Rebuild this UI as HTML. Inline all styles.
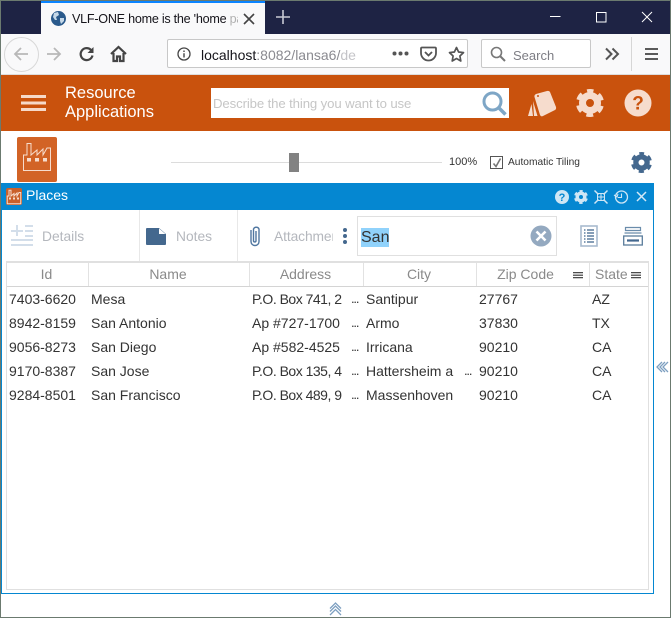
<!DOCTYPE html>
<html><head><meta charset="utf-8">
<style>
html,body{margin:0;padding:0;width:671px;height:618px;overflow:hidden;background:#fff}
body{position:relative;font-family:"Liberation Sans",sans-serif;color:#333}
.a{position:absolute;white-space:nowrap}
svg{position:absolute;overflow:visible}
.h{position:absolute;top:263px;height:23px;line-height:22px;font-size:14px;color:#8a8a8a;text-align:center;box-sizing:border-box;border-right:1px solid #e2e2e2;padding-right:2px}
.c{position:absolute;font-size:14px;color:#333;white-space:nowrap;line-height:18px}
.p{letter-spacing:-.5px}
.e{letter-spacing:-1.2px;font-size:13px}
</style></head><body>
<div class="a" style="left:0;top:0;width:671px;height:34px;background:#1e2344"></div>
<div class="a" style="left:41px;top:1px;width:224px;height:33px;background:#f9f9fa"></div>
<div class="a" style="left:41px;top:1px;width:224px;height:2px;background:#0a84ff"></div>
<svg style="left:51px;top:11px" width="15" height="15" viewBox="0 0 15 15"><circle cx="7.5" cy="7.5" r="7.5" fill="#2a5a8c"/><path d="M3 2l4-1 1 3-3 2 1 3-2 0-2-3zM9 7l4 0 0 3-3 3-1-3z" fill="#c5d8e8"/></svg>
<div class="a" style="left:72px;top:10px;font-size:12.6px;letter-spacing:-.25px;line-height:18px;color:#15141a;width:166px;overflow:hidden">VLF-ONE home is the 'home <span style="color:#b0b0b0">pa</span></div>
<svg style="left:243px;top:13px" width="12" height="12"><path d="M1 1L11 11M11 1L1 11" stroke="#444" stroke-width="1.6"/></svg>
<svg style="left:276px;top:10px" width="14" height="14"><path d="M7 0V14M0 7H14" stroke="#c8cad4" stroke-width="1.6"/></svg>
<svg style="left:550px;top:10px" width="110" height="14"><path d="M0 6.5H10.500" stroke="#fff"/><rect x="46.5" y="2.5" width="9.500" height="9.500" fill="none" stroke="#fff"/><path d="M92 2L102 12M102 2L92 12" stroke="#fff"/></svg>

<div class="a" style="left:0;top:34px;width:671px;height:41px;background:#f9f9fa;border-bottom:1px solid #ddd;box-sizing:border-box"></div>
<div class="a" style="left:4px;top:37px;width:33px;height:33px;border:1px solid #d8d8d8;border-radius:50%;background:#f9f9fa"></div>
<svg style="left:13px;top:46px" width="16" height="16"><path d="M15 8H2M8 2L2 8L8 14" fill="none" stroke="#b8b8b8" stroke-width="1.8"/></svg>
<svg style="left:46px;top:46px" width="16" height="16"><path d="M1 8H14M8 2L14 8L8 14" fill="none" stroke="#b8b8b8" stroke-width="1.8"/></svg>
<svg style="left:79px;top:46px" width="16" height="16"><path d="M13.5 9.5A6 6 0 1 1 11.5 3.5L13 5" fill="none" stroke="#444" stroke-width="2.200"/><path d="M14.5 1V7H8.5Z" fill="#444"/></svg>
<svg style="left:110px;top:46px" width="17" height="16"><path d="M1 8L8.500 1L16 8M3.500 7V15H7V10.500H10V15H13.500V7" fill="none" stroke="#444" stroke-width="2.200"/></svg>
<div class="a" style="left:167px;top:39px;width:301px;height:29px;box-sizing:border-box;background:#fff;border:1px solid #c8c8c8;border-radius:2px"></div>
<svg style="left:177px;top:47px" width="14" height="14"><circle cx="7" cy="7" r="6" fill="none" stroke="#444" stroke-width="1.300"/><path d="M7 6.200V10.500M7 3.500V5" stroke="#444" stroke-width="1.400"/></svg>
<div class="a" style="left:201px;top:46px;font-size:14px;line-height:18px;width:155px;overflow:hidden;color:#15141a">localhost<span style="color:#8a8a90">:8082/lansa6/</span><span style="color:#c4c4c8">de</span></div>
<svg style="left:392px;top:51px" width="17" height="5"><circle cx="2.500" cy="2.500" r="2" fill="#555"/><circle cx="8.500" cy="2.500" r="2" fill="#555"/><circle cx="14.500" cy="2.500" r="2" fill="#555"/></svg>
<svg style="left:420px;top:46px" width="17" height="16"><path d="M2 1.500H15Q16 1.500 16 2.500V7A7.500 7.500 0 0 1 1 7V2.500Q1 1.500 2 1.500Z" fill="none" stroke="#555" stroke-width="1.800"/><path d="M5 6L8.500 9.500L12 6" fill="none" stroke="#555" stroke-width="1.800"/></svg>
<svg style="left:448px;top:46px" width="17" height="16"><path d="M8.500 1.500L10.600 6L15.500 6.600L11.900 10L12.800 15L8.500 12.500L4.200 15L5.100 10L1.500 6.600L6.400 6Z" fill="none" stroke="#555" stroke-width="1.700" stroke-linejoin="round"/></svg>
<div class="a" style="left:481px;top:39px;width:110px;height:29px;box-sizing:border-box;background:#fff;border:1px solid #c8c8c8;border-radius:2px"></div>
<svg style="left:490px;top:46px" width="16" height="16"><circle cx="6.500" cy="6.500" r="5" fill="none" stroke="#777" stroke-width="1.600"/><path d="M10 10L15 15" stroke="#777" stroke-width="2"/></svg>
<div class="a" style="left:513px;top:47px;font-size:13px;line-height:17px;color:#7d7d84">Search</div>
<svg style="left:605px;top:47px" width="15" height="14"><path d="M1 1.500L6.500 7L1 12.500M7.500 1.500L13 7L7.500 12.500" fill="none" stroke="#555" stroke-width="2"/></svg>
<div class="a" style="left:631px;top:37px;width:1px;height:34px;background:#d6d6d6"></div>
<svg style="left:645px;top:48px" width="13" height="12"><path d="M0 1H13M0 6H13M0 11H13" stroke="#444" stroke-width="1.800"/></svg>

<div class="a" style="left:0;top:75px;width:671px;height:56px;background:#c9520d"></div>
<svg style="left:21px;top:95px" width="25" height="17"><path d="M0 1.500H25M0 8H25M0 14.500H25" stroke="#f6d9c8" stroke-width="3"/></svg>
<div class="a" style="left:65px;top:84px;font-size:16.500px;line-height:19px;color:#fff">Resource<br>Applications</div>
<div class="a" style="left:211px;top:88px;width:298px;height:30px;background:#fff"></div>
<div class="a" style="left:213px;top:95px;font-size:13.200px;letter-spacing:-.12px;line-height:17px;color:#c6c6c6">Describe the thing you want to use</div>
<svg style="left:482px;top:91px" width="25" height="25"><circle cx="10.500" cy="10.500" r="8.500" fill="none" stroke="#7ea6c6" stroke-width="3"/><path d="M16.500 16.500L23.500 23.500" stroke="#7ea6c6" stroke-width="3.500"/></svg>
<svg style="left:527px;top:90px" width="30" height="28"><path d="M9 4L20 1Q22 0.500 23 2L29 17Q29.500 19 28 20L16 26Q14 27 13 25L7.500 7Q7 5 9 4Z" fill="#f6dccd"/><path d="M6 11L10.500 26L7 26ZM4.500 14L6 26L1 26Z" fill="#f6dccd"/><circle cx="11" cy="6" r="1" fill="#c9520d"/></svg>
<svg style="left:576px;top:89px" width="28" height="28" viewBox="0 0 28 28"><circle cx="14" cy="14" r="7.500" fill="none" stroke="#f6dccd" stroke-width="7"/><circle cx="14" cy="14" r="11.500" fill="none" stroke="#f6dccd" stroke-width="5" stroke-dasharray="6.500 5.540" stroke-dashoffset="3.250" transform="rotate(-90 14 14)"/></svg>
<svg style="left:624px;top:89px" width="28" height="28"><circle cx="14" cy="14" r="13.500" fill="#f6dccd"/><text x="14" y="20.500" text-anchor="middle" font-family="Liberation Sans" font-weight="bold" font-size="19" fill="#c9520d">?</text></svg>

<div class="a" style="left:17px;top:137px;width:40px;height:45px;background:#d26326;border-radius:2px"></div>
<svg style="left:23px;top:143px" width="28" height="28"><path d="M0.500 27.500V12H4V0.500H8V12L14 7V12L20 6V12L24 5H27.500V27.500Z" fill="none" stroke="#f6dccd" stroke-width="1"/><path d="M4 15H8V18.500H4ZM12 15H16V18.500H12ZM20 15H24V18.500H20Z" fill="#f6dccd"/></svg>
<div class="a" style="left:171px;top:162px;width:271px;height:1px;background:#dcdcdc"></div>
<div class="a" style="left:289px;top:153px;width:10px;height:19px;background:#828282"></div>
<div class="a" style="left:449px;top:155px;font-size:11px;line-height:15px;color:#333">100%</div>
<div class="a" style="left:490px;top:156px;width:13px;height:13px;box-sizing:border-box;border:1px solid #555;background:#fff"></div>
<svg style="left:492px;top:158px" width="10" height="10"><path d="M1.500 5.500L4 8.500L8.500 0.500" fill="none" stroke="#777" stroke-width="1.600"/></svg>
<div class="a" style="left:508px;top:155px;font-size:10.200px;line-height:15px;color:#333">Automatic Tiling</div>
<svg style="left:631px;top:152px" width="21" height="21" viewBox="0 0 28 28"><circle cx="14" cy="14" r="7.500" fill="none" stroke="#44688e" stroke-width="7"/><circle cx="14" cy="14" r="11.500" fill="none" stroke="#44688e" stroke-width="5" stroke-dasharray="6.500 5.540" stroke-dashoffset="3.250" transform="rotate(-90 14 14)"/></svg>

<div class="a" style="left:1px;top:183px;width:653px;height:27px;background:#0587d1"></div>
<div class="a" style="left:1px;top:183px;width:1px;height:411px;background:#0587d1"></div>
<div class="a" style="left:653px;top:183px;width:1px;height:411px;background:#0587d1"></div>
<div class="a" style="left:1px;top:593px;width:653px;height:1px;background:#0587d1"></div>
<div class="a" style="left:6px;top:188px;width:16px;height:17px;background:#c9602a;border-radius:2px"></div>
<svg style="left:7px;top:190px" width="14" height="14" viewBox="0 0 28 28"><path d="M0.500 27.500V12H4V0.500H8V12L14 7V12L20 6V12L24 5H27.500V27.500Z" fill="none" stroke="#f6dccd" stroke-width="2"/><path d="M4 15H8V19H4ZM12 15H16V19H12ZM20 15H24V19H20Z" fill="#f6dccd"/></svg>
<div class="a" style="left:26px;top:187px;font-size:14px;line-height:17px;color:#fff">Places</div>
<svg style="left:555px;top:190px" width="14" height="14"><circle cx="7" cy="7" r="7" fill="#cfe6f5"/><text x="7" y="11" text-anchor="middle" font-family="Liberation Sans" font-weight="bold" font-size="11" fill="#0587d1">?</text></svg>
<svg style="left:574px;top:190px" width="14" height="14" viewBox="0 0 28 28"><circle cx="14" cy="14" r="7.500" fill="none" stroke="#cfe6f5" stroke-width="7"/><circle cx="14" cy="14" r="11.500" fill="none" stroke="#cfe6f5" stroke-width="5" stroke-dasharray="6.500 5.540" stroke-dashoffset="3.250" transform="rotate(-90 14 14)"/></svg>
<svg style="left:594px;top:190px" width="14" height="14"><path d="M0.500 0.500L4.500 4.500M13.500 0.500L9.500 4.500M0.500 13.500L4.500 9.500M13.500 13.500L9.500 9.500" stroke="#cfe6f5" stroke-width="1.500"/><rect x="3.500" y="3.500" width="7" height="7" fill="none" stroke="#cfe6f5"/><path d="M7 3V11M3 7H11" stroke="#cfe6f5"/></svg>
<svg style="left:614px;top:190px" width="14" height="14"><circle cx="7.500" cy="7" r="6" fill="none" stroke="#cfe6f5" stroke-width="1.300"/><path d="M7.500 3.500V7.500H4M0 5L3 7L4 4" fill="none" stroke="#cfe6f5" stroke-width="1.100"/></svg>
<svg style="left:636px;top:191px" width="11" height="11"><path d="M1 1L10 10M10 1L1 10" stroke="#d4e9f6" stroke-width="1.500"/></svg>

<div class="a" style="left:139px;top:210px;width:1px;height:52px;background:#e8e8e8"></div>
<div class="a" style="left:237px;top:210px;width:1px;height:52px;background:#e8e8e8"></div>
<svg style="left:11px;top:225px" width="23" height="21"><path d="M0 6H12M6 0V11M14 1H22M14 6H22M14 11H22M0 15H22M0 20H22" stroke="#d3deea" stroke-width="2"/></svg>
<div class="a" style="left:42px;top:228px;font-size:13.800px;line-height:17px;color:#b4b7bd">Details</div>
<svg style="left:146px;top:228px" width="21" height="17"><path d="M1 0H13L20 6V16Q20 17 19 17H1Q0 17 0 16V1Q0 0 1 0Z" fill="#44688e"/><path d="M13 0.500V6H19.500Z" fill="#fff"/></svg>
<div class="a" style="left:176px;top:228px;font-size:13.800px;line-height:17px;color:#b4b7bd">Notes</div>
<svg style="left:248px;top:224px" width="14" height="24"><path d="M3 6V17.500A4 4 0 0 0 11 17.500V5A3 3 0 0 0 5.500 5V17A1.300 1.300 0 0 0 8 17V7" fill="none" stroke="#4f76a0" stroke-width="1.400"/></svg>
<div class="a" style="left:274px;top:228px;width:59px;overflow:hidden;font-size:13.800px;letter-spacing:-.1px;line-height:17px;color:#b4b7bd">Attachments</div>
<svg style="left:343px;top:228px" width="4" height="16"><circle cx="2" cy="2" r="2" fill="#44688e"/><circle cx="2" cy="8" r="2" fill="#44688e"/><circle cx="2" cy="14" r="2" fill="#44688e"/></svg>
<div class="a" style="left:357px;top:216px;width:200px;height:40px;box-sizing:border-box;border:1px solid #e0e0e0;background:#fff"></div>
<div class="a" style="left:361px;top:228px;height:19px;background:#90d2fb;font-size:16px;line-height:19px;color:#333">San</div>
<svg style="left:530px;top:225px" width="22" height="22"><circle cx="11" cy="11" r="10.500" fill="#94a9c0"/><path d="M6.500 6.500L15.500 15.500M15.500 6.500L6.500 15.500" stroke="#fff" stroke-width="2.600"/></svg>
<svg style="left:580px;top:225px" width="18" height="22"><rect x="1" y="1" width="16" height="20" fill="#fff" stroke="#a8bbcf" stroke-width="1.600"/><path d="M4 5H5.500M7 5H14M4 8H5.500M7 8H14M4 11H5.500M7 11H14M4 14H5.500M7 14H14M4 17H5.500M7 17H14" stroke="#5f7f9f" stroke-width="1.600"/></svg>
<svg style="left:623px;top:226px" width="20" height="20"><path d="M2.500 1.500H17.500V4.500H2.500ZM1.500 7H18.500" fill="none" stroke="#6a8cab" stroke-width="1.200"/><rect x="0.700" y="10" width="18.600" height="9" fill="none" stroke="#5a7c9c" stroke-width="1.300"/><path d="M4 14.500H16" stroke="#44688e" stroke-width="2.200"/></svg>

<div class="a" style="left:6px;top:261px;width:643px;height:329px;box-sizing:border-box;border:1px solid #e0e0e0;border-top-width:2px"></div>
<div class="a" style="left:7px;top:286px;width:641px;height:1px;background:#d4d4d4"></div>
<div class="h" style="left:7px;width:82px">Id</div>
<div class="h" style="left:89px;width:161px">Name</div>
<div class="h" style="left:250px;width:114px">Address</div>
<div class="h" style="left:364px;width:113px">City</div>
<div class="h" style="left:477px;width:113px;padding-right:15px">Zip Code</div>
<div class="h" style="left:590px;width:58px;border:0;text-align:left;padding-left:5px;padding-right:0">State</div>
<svg style="left:573px;top:272px" width="10" height="7"><path d="M0 .7H10M0 3.200H10M0 5.700H10" stroke="#333" stroke-width="1.200"/></svg>
<svg style="left:631px;top:272px" width="10" height="7"><path d="M0 .7H10M0 3.200H10M0 5.700H10" stroke="#333" stroke-width="1.200"/></svg>

<div class="c" style="left:9px;top:290px">7403-6620</div><div class="c" style="left:91px;top:290px">Mesa</div><div class="c p" style="left:252px;top:290px">P.O. Box 741, 2</div><div class="c e" style="left:351px;top:290px">...</div><div class="c" style="left:366px;top:290px">Santipur</div><div class="c" style="left:479px;top:290px">27767</div><div class="c" style="left:592px;top:290px">AZ</div>
<div class="c" style="left:9px;top:314px">8942-8159</div><div class="c" style="left:91px;top:314px">San Antonio</div><div class="c" style="left:252px;top:314px">Ap #727-1700</div><div class="c e" style="left:351px;top:314px">...</div><div class="c" style="left:366px;top:314px">Armo</div><div class="c" style="left:479px;top:314px">37830</div><div class="c" style="left:592px;top:314px">TX</div>
<div class="c" style="left:9px;top:338px">9056-8273</div><div class="c" style="left:91px;top:338px">San Diego</div><div class="c" style="left:252px;top:338px">Ap #582-4525</div><div class="c e" style="left:351px;top:338px">...</div><div class="c" style="left:366px;top:338px">Irricana</div><div class="c" style="left:479px;top:338px">90210</div><div class="c" style="left:592px;top:338px">CA</div>
<div class="c" style="left:9px;top:362px">9170-8387</div><div class="c" style="left:91px;top:362px">San Jose</div><div class="c p" style="left:252px;top:362px">P.O. Box 135, 4</div><div class="c e" style="left:351px;top:362px">...</div><div class="c" style="left:366px;top:362px">Hattersheim a</div><div class="c e" style="left:464px;top:362px">...</div><div class="c" style="left:479px;top:362px">90210</div><div class="c" style="left:592px;top:362px">CA</div>
<div class="c" style="left:9px;top:386px">9284-8501</div><div class="c" style="left:91px;top:386px">San Francisco</div><div class="c p" style="left:252px;top:386px">P.O. Box 489, 9</div><div class="c e" style="left:351px;top:386px">...</div><div class="c" style="left:366px;top:386px">Massenhoven</div><div class="c" style="left:479px;top:386px">90210</div><div class="c" style="left:592px;top:386px">CA</div>

<svg style="left:656px;top:361px" width="13" height="12"><path d="M6 1L1 6L6 11M9 1L4 6L9 11M12 1L7 6L12 11" fill="none" stroke="#7d9fc0" stroke-width="1.300"/></svg>
<svg style="left:329px;top:602px" width="13" height="14"><path d="M1 6.500L6.500 1L12 6.500M1 9.500L6.500 4L12 9.500M1 13L6.500 7.500L12 13" fill="none" stroke="#7d9fc0" stroke-width="1.300"/></svg>

<div class="a" style="left:0;top:0;width:671px;height:1px;background:#6b7a6f"></div>
<div class="a" style="left:0;top:617px;width:671px;height:1px;background:#6b7a6f"></div>
<div class="a" style="left:0;top:0;width:1px;height:618px;background:#6b7a6f"></div>
<div class="a" style="left:670px;top:0;width:1px;height:618px;background:#6b7a6f"></div>
</body></html>
